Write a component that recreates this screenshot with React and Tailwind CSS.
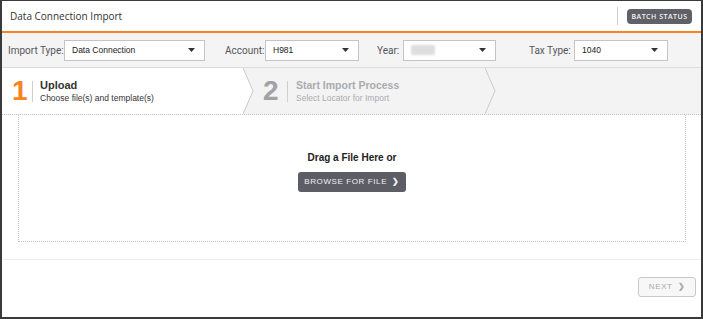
import React from "react";

const selects = [
  { label: "Import Type:", value: "Data Connection", lw: "w-[56px]", width: "w-[141px]", ml: "ml-0" },
  { label: "Account:", value: "H981", lw: "w-[40px]", width: "w-[94px]", ml: "ml-[20px]" },
  { label: "Year:", value: null, lw: "w-[26px]", width: "w-[93px]", ml: "ml-[18px]" },
  { label: "Tax Type:", value: "1040", lw: "w-[45px]", width: "w-[94px]", ml: "ml-[33px]" },
];

function Caret() {
  return (
    <svg width="7" height="4" viewBox="0 0 7 4" className="shrink-0">
      <path d="M0 0 L7 0 L3.5 4 Z" fill="#333" />
    </svg>
  );
}

function Chevron({ fill }) {
  return (
    <svg width="11" height="46" viewBox="0 0 11 46" className="shrink-0 block">
      {fill && <polygon points="0,0 10,23 0,46" fill={fill} />}
      <polyline points="0,0 10,23 0,46" fill="none" stroke="#c9c9cc" strokeWidth="1" />
    </svg>
  );
}

export default function App() {
  return (
    <div className="w-[703px] h-[319px] bg-white border-x-2 border-b-2 border-t border-[#3a3a3a] flex flex-col font-['Liberation_Sans',Arial,sans-serif] text-[#333] overflow-hidden">
      {/* header */}
      <div className="h-[32px] shrink-0 flex items-center justify-between pl-[8px] pr-[9px] border-b-2 border-[#f7841c]">
        <span className="font-['Open_Sans',sans-serif] text-[10px] text-[#333]">Data Connection Import</span>
        <div className="flex items-center">
          <div className="w-px h-[18px] bg-[#cfcfcf] mr-[9px]" />
          <button className="h-[15px] w-[65px] rounded-[4px] bg-[#5f6068] text-[#f4f4f4] text-[7px] font-semibold tracking-[0.5px] font-['Open_Sans',sans-serif] leading-none">
            BATCH STATUS
          </button>
        </div>
      </div>

      {/* filter bar */}
      <div className="h-[35px] shrink-0 bg-[#f4f4f5] border-b border-[#dcdcde] flex items-center pl-[6px]">
        {selects.map((s) => (
          <div key={s.label} className={`flex items-center ${s.ml}`}>
            <span className={`${s.lw} font-['Roboto',sans-serif] text-[10px] text-[#555] whitespace-nowrap`}>{s.label}</span>
            <div className={`${s.width} h-[21px] bg-white border border-[#c4c4c6] flex items-center justify-between pl-[7px] pr-[9px]`}>
              {s.value ? (
                <span className="text-[8.5px] text-[#222]">{s.value}</span>
              ) : (
                <span className="w-[24px] h-[10px] bg-[#dedede] blur-[1px] rounded-[1px]" />
              )}
              <Caret />
            </div>
          </div>
        ))}
      </div>

      {/* stepper */}
      <div className="h-[47px] shrink-0 bg-[#f3f3f4] flex border-b border-dotted border-[#c6c6c6]">
        <div className="flex">
          <div className="w-[241px] bg-white flex items-center pl-[10px]">
            <span className="text-[28px] font-bold text-[#f7841c] leading-none w-[14px]">1</span>
            <div className="w-px h-[21px] bg-[#cfcfcf] ml-[6px] mr-[7px]" />
            <div className="flex flex-col">
              <span className="text-[11px] font-bold text-[#333] leading-[13px]">Upload</span>
              <span className="text-[8.5px] text-[#333] leading-[12px]">Choose file(s) and template(s)</span>
            </div>
          </div>
          <Chevron fill="#ffffff" />
        </div>
        <div className="flex">
          <div className="w-[231px] flex items-center pl-[9px]">
            <span className="text-[28px] font-bold text-[#a1a1a6] leading-none w-[14px]">2</span>
            <div className="w-px h-[21px] bg-[#cfcfcf] ml-[10px] mr-[8px]" />
            <div className="flex flex-col">
              <span className="text-[10.5px] font-bold text-[#ababae] leading-[13px]">Start Import Process</span>
              <span className="text-[8.5px] text-[#ababae] leading-[12px]">Select Locator for Import</span>
            </div>
          </div>
          <Chevron />
        </div>
      </div>

      {/* drop zone */}
      <div className="pl-[16px] pr-[15px] shrink-0">
        <div className="h-[127px] border-x border-b border-dotted border-[#c6c6c6] flex flex-col items-center pt-[37px]">
          <span className="text-[10px] font-bold text-[#222] leading-[12px]">Drag a File Here or</span>
          <button className="mt-[8px] w-[108px] h-[20px] rounded-[3px] bg-[#5c5d65] text-[#f2f2f2] text-[8px] tracking-[0.6px] flex items-center justify-center gap-[5px]">
            BROWSE FOR FILE <span className="text-[8px] font-bold">❯</span>
          </button>
        </div>
      </div>

      {/* footer */}
      <div className="mt-[17px] border-t border-[#efefef] flex justify-end pr-[5px] pt-[17px]">
        <button className="w-[58px] h-[20px] rounded-[3px] border border-[#c8c8ca] bg-[#f7f7f7] text-[#a9a9ac] text-[8px] tracking-[0.6px] flex items-center justify-center gap-[5px]">
          NEXT <span className="font-bold">❯</span>
        </button>
      </div>
    </div>
  );
}
